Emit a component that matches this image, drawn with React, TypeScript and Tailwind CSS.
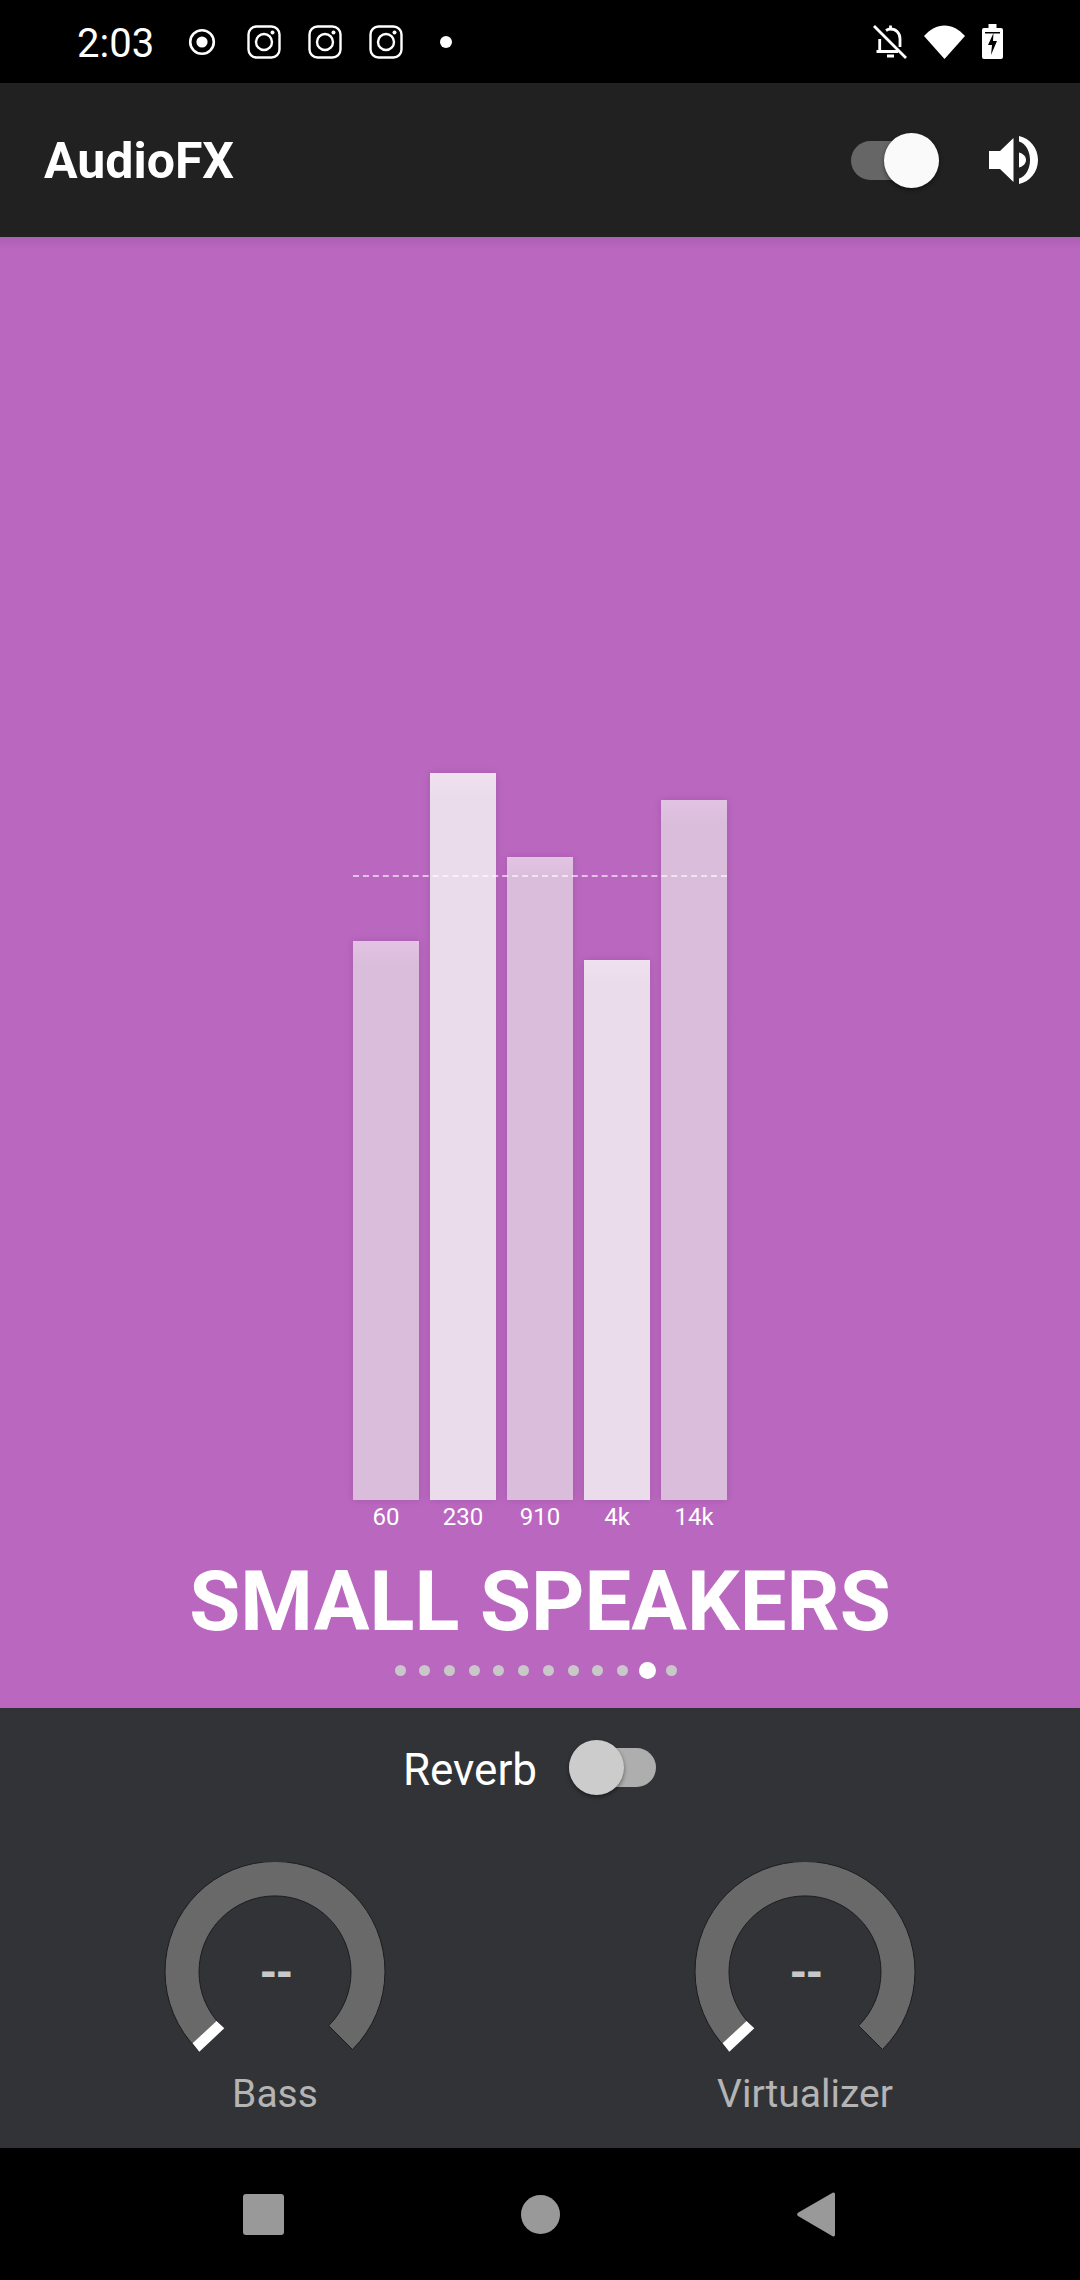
const bars = [
  { label: "60", height: 559, light: false },
  { label: "230", height: 727, light: true },
  { label: "910", height: 643, light: false },
  { label: "4k", height: 540, light: true },
  { label: "14k", height: 700, light: false },
];

function Instagram() {
  return (
    <svg width="34" height="34" viewBox="0 0 34 34" fill="none" stroke="white" strokeWidth="2.4">
      <rect x="1.5" y="1.5" width="31" height="31" rx="8" />
      <circle cx="17" cy="17" r="8" />
      <circle cx="25.500" cy="7.500" r="2" fill="white" stroke="none" />
    </svg>
  );
}

function StatusBar() {
  return (
    <div className="h-[83px] bg-black flex items-center text-white">
      <span className="ml-[77px] w-[108px] pt-[4px] text-[40px]">2:03</span>
      <svg width="28" height="28" viewBox="0 0 28 28" className="ml-[3px] mr-[31px]">
        <circle cx="14" cy="14" r="11.800" fill="none" stroke="white" strokeWidth="2.600" />
        <circle cx="14" cy="14" r="5.600" fill="white" />
      </svg>
      <div className="flex gap-[27px]">
        <Instagram />
        <Instagram />
        <Instagram />
      </div>
      <div className="ml-[37px] w-3 h-3 rounded-full bg-white" />
      <div className="ml-auto mr-[77px] flex items-center gap-[17px]">
        <svg width="34" height="34" viewBox="0 0 34 34" fill="none" stroke="white" strokeWidth="2.800">
          <path d="M1 1 33 33" />
          <path d="M6.700 14V26.500M3.500 26.500H25" />
          <path d="M13 5.500C14.500 4.500 16 4 17.500 4C23 4 27 8 27 13.500V22" />
          <path d="M17.500 4V0.500M14 31H21" />
        </svg>
        <svg width="41" height="34" viewBox="0 0 41 34">
          <path d="M0 11C6 4.500 13 0.500 20.500 0.500S35 4.500 41 11L20.500 34z" fill="white" />
        </svg>
        <svg width="21" height="35" viewBox="0 0 21 35">
          <path
            d="M6.500 0h8v4H19a2 2 0 0 1 2 2v27a2 2 0 0 1-2 2H2a2 2 0 0 1-2-2V6a2 2 0 0 1 2-2h4.500z"
            fill="white"
          />
          <path d="M3 8h15v1.500H3z" fill="black" />
          <path d="M11.500 9 6 21h4l-1 10 6-14h-4z" fill="black" />
        </svg>
      </div>
    </div>
  );
}

function Toolbar() {
  return (
    <div className="h-[154px] bg-[#212121] flex items-center">
      <span className="ml-[44px] pt-[2px] text-[50px] font-bold text-white">AudioFX</span>
      <div className="ml-auto mr-[50px] relative w-[88px] h-[39px] rounded-full bg-[#666666]">
        <div className="absolute right-0 top-[-8px] w-[55px] h-[55px] rounded-full bg-[#fafafa] shadow-[0_2px_4px_rgba(0,0,0,0.45)]" />
      </div>
      <svg width="50" height="48" viewBox="0 0 50 48" className="mr-[41px]" fill="white">
        <path d="M0 15h11L24.500 2v44L11 33H0z" />
        <path d="M30 16.500c4 1 7 4 7 7.500s-3 6.500-7 7.500z" />
        <path d="M30 0c11 2.500 19 12 19 24s-8 21.500-19 24v-5.500c7-2 11-10 11-18.500S37 7.500 30 5.500z" />
      </svg>
    </div>
  );
}

function Equalizer() {
  return (
    <div className="relative flex gap-[11px] items-end">
      {bars.map((b) => (
        <div key={b.label} className="w-[66px] flex flex-col items-center">
          <div
            className={
              b.light
                ? "w-full bg-linear-to-b from-[#efe1f0] to-[#eadcea] to-[24px] shadow-[0_0_8px_rgba(0,0,0,0.12)]"
                : "w-full bg-linear-to-b from-[#e2c3e3] to-[#dabcdb] to-[24px] shadow-[0_0_8px_rgba(0,0,0,0.12)]"
            }
            style={{ height: b.height }}
          />
          <span className="h-[34px] text-[24px] leading-[34px] text-white">{b.label}</span>
        </div>
      ))}
      <div className="absolute left-0 right-0 top-[102px] h-[2px] border-t-2 border-dashed border-white/60" />
    </div>
  );
}

function Knob({ label }: { label: string }) {
  return (
    <div className="flex flex-col items-center w-[240px]">
      <div className="relative w-[240px] h-[200px]">
        <svg width="240" height="200" viewBox="0 0 240 200">
          <path
            d="M42.500 187.500A110 110 0 1 1 197.500 187.500L173.700 163.700A76 76 0 1 0 66.300 163.700z"
            fill="#696969"
            stroke="#1c1c1e"
            strokeWidth="1"
          />
          <path d="M37.600 181.300 44.300 189.700 69.300 166.300 61.600 159z" fill="white" />
        </svg>
        <span className="absolute left-0 right-0 top-[88px] text-center text-[42px] leading-[46px] tracking-[-3px] font-black text-[#c8c8c8]">
          --
        </span>
      </div>
      <span className="mt-[10px] text-[39px] leading-[44px] text-[#b4b4b4]">{label}</span>
    </div>
  );
}

export default function App() {
  return (
    <div className="w-[1080px] h-[2280px] flex flex-col overflow-hidden font-['Roboto',sans-serif]">
      <StatusBar />
      <Toolbar />
      <div className="flex-1 flex flex-col items-center justify-end bg-linear-to-b from-[#ad5fb3] to-[#ba67c0] to-[12px]">
        <Equalizer />
        <h1 className="mt-[20px] text-[83px] leading-[96px] font-bold text-white">SMALL SPEAKERS</h1>
        <div className="mt-[12px] mb-[29px] mr-[8px] flex items-center h-[17px]">
          {Array.from({ length: 12 }).map((_, i) => (
            <div key={i} className="w-[24.7px] flex justify-center">
              <div
                className={
                  i === 10
                    ? "w-[17px] h-[17px] rounded-full bg-white"
                    : "w-[11px] h-[11px] rounded-full bg-[#c8c8c8]"
                }
              />
            </div>
          ))}
        </div>
      </div>
      <div className="h-[440px] bg-[#323337] flex flex-col items-center">
        <div className="mt-[32px] mr-[21px] h-[55px] flex items-center gap-[32px]">
          <span className="pt-[4px] text-[44px] text-white">Reverb</span>
          <div className="relative w-[87px] h-[39px] rounded-full bg-[#aeaeae]">
            <div className="absolute left-0 top-[-8px] w-[55px] h-[55px] rounded-full bg-[#cccccc] shadow-[0_2px_4px_rgba(0,0,0,0.45)]" />
          </div>
        </div>
        <div className="mt-[67px] w-full flex justify-between px-[155px]">
          <Knob label="Bass" />
          <Knob label="Virtualizer" />
        </div>
      </div>
      <div className="h-[132px] bg-black flex items-center">
        <div className="ml-[243px] w-[41px] h-[41px] rounded-[3px] bg-[#999999]" />
        <div className="ml-[237px] w-[39px] h-[39px] rounded-full bg-[#999999]" />
        <svg width="39" height="45" viewBox="0 0 39 45" className="ml-[237px]">
          <path d="M38 2V43a1.500 1.500 0 0 1-2.400 1.200L1 24a2 2 0 0 1 0-3.300L35.600 .8A1.500 1.500 0 0 1 38 2z" fill="#999999" />
        </svg>
      </div>
    </div>
  );
}
